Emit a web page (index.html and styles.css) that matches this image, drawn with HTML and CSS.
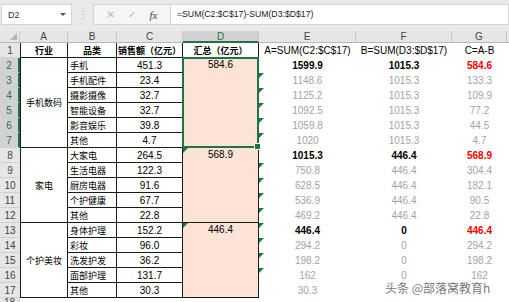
FILE: index.html
```html
<!DOCTYPE html>
<html>
  <head>
    <title>Sheet</title>
    <meta charset="UTF-8">
    <link rel="stylesheet" href="styles.css">
  </head>
  <body>
    <div class="fbar">
      <div class="namebox"><span>D2</span><span class="caret"></span></div>
      <span class="dots">⋮</span>
      <div class="btns"><span class="x">✕</span><span class="ok">✓</span><span class="fx">fx</span></div>
      <div class="formula">=SUM(C2:$C$17)-SUM(D3:$D$17)</div>
    </div>

    <div class="sheet">
      <!--column headers-->
      <div class="ch corner"></div>
      <div class="ch">A</div>
      <div class="ch">B</div>
      <div class="ch">C</div>
      <div class="ch on">D</div>
      <div class="ch">E</div>
      <div class="ch">F</div>
      <div class="ch">G</div>
      <div class="ch end"></div>

      <!--row 1-->
      <div class="rh">1</div>
      <div class="c t a zh b">行业</div>
      <div class="c t zh b">品类</div>
      <div class="c t zh b">销售额（亿元）</div>
      <div class="c t zh b">汇总（亿元）</div>
      <div class="c">A=SUM(C2:$C$17)</div>
      <div class="c">B=SUM(D3:$D$17)</div>
      <div class="c">C=A-B</div>

      <!--group 1-->
      <div class="rh on">2</div>
      <div class="c t a zh m6">手机数码</div>
      <div class="c t zh l">手机</div>
      <div class="c t">451.3</div>
      <div class="c t sum m6 sel">584.6</div>
      <div class="c b">1599.9</div>
      <div class="c b">1015.3</div>
      <div class="c b red">584.6</div>

      <div class="rh on">3</div>
      <div class="c t zh l">手机配件</div>
      <div class="c t">23.4</div>
      <div class="c g err">1148.6</div>
      <div class="c g">1015.3</div>
      <div class="c g">133.3</div>

      <div class="rh on">4</div>
      <div class="c t zh l">摄影摄像</div>
      <div class="c t">32.7</div>
      <div class="c g err">1125.2</div>
      <div class="c g">1015.3</div>
      <div class="c g">109.9</div>

      <div class="rh on">5</div>
      <div class="c t zh l">智能设备</div>
      <div class="c t">32.7</div>
      <div class="c g err">1092.5</div>
      <div class="c g">1015.3</div>
      <div class="c g">77.2</div>

      <div class="rh on">6</div>
      <div class="c t zh l">影音娱乐</div>
      <div class="c t">39.8</div>
      <div class="c g err">1059.8</div>
      <div class="c g">1015.3</div>
      <div class="c g">44.5</div>

      <div class="rh on">7</div>
      <div class="c t zh l">其他</div>
      <div class="c t">4.7</div>
      <div class="c g err">1020</div>
      <div class="c g">1015.3</div>
      <div class="c g">4.7</div>

      <!--group 2-->
      <div class="rh">8</div>
      <div class="c t a zh m5">家电</div>
      <div class="c t zh l">大家电</div>
      <div class="c t">264.5</div>
      <div class="c t sum m5 err">568.9</div>
      <div class="c b">1015.3</div>
      <div class="c b">446.4</div>
      <div class="c b red">568.9</div>

      <div class="rh">9</div>
      <div class="c t zh l">生活电器</div>
      <div class="c t">122.3</div>
      <div class="c g err">750.8</div>
      <div class="c g">446.4</div>
      <div class="c g">304.4</div>

      <div class="rh">10</div>
      <div class="c t zh l">厨房电器</div>
      <div class="c t">91.6</div>
      <div class="c g err">628.5</div>
      <div class="c g">446.4</div>
      <div class="c g">182.1</div>

      <div class="rh">11</div>
      <div class="c t zh l">个护健康</div>
      <div class="c t">67.7</div>
      <div class="c g err">536.9</div>
      <div class="c g">446.4</div>
      <div class="c g">90.5</div>

      <div class="rh">12</div>
      <div class="c t zh l">其他</div>
      <div class="c t">22.8</div>
      <div class="c g err">469.2</div>
      <div class="c g">446.4</div>
      <div class="c g">22.8</div>

      <!--group 3-->
      <div class="rh">13</div>
      <div class="c t a zh m5">个护美妆</div>
      <div class="c t zh l">身体护理</div>
      <div class="c t">152.2</div>
      <div class="c t sum m5 err">446.4</div>
      <div class="c b err">446.4</div>
      <div class="c b">0</div>
      <div class="c b red">446.4</div>

      <div class="rh">14</div>
      <div class="c t zh l">彩妆</div>
      <div class="c t">96.0</div>
      <div class="c g err">294.2</div>
      <div class="c g">0</div>
      <div class="c g">294.2</div>

      <div class="rh">15</div>
      <div class="c t zh l">洗发护发</div>
      <div class="c t">36.2</div>
      <div class="c g err">198.2</div>
      <div class="c g">0</div>
      <div class="c g">198.2</div>

      <div class="rh">16</div>
      <div class="c t zh l">面部护理</div>
      <div class="c t">131.7</div>
      <div class="c g err">162</div>
      <div class="c g">0</div>
      <div class="c g">162</div>

      <div class="rh">17</div>
      <div class="c t zh l">其他</div>
      <div class="c t">30.3</div>
      <div class="c g">30.3</div>

      <div class="rh last">18</div>
    </div>

    <!--watermark sits over the sheet-->
    <div class="mark">头条 @部落窝教育h</div>
  </body>
</html>
```

FILE: styles.css
```css
* {
  box-sizing: border-box;
}
body {
  margin: 0;
  width: 509px;
  height: 302px;
  overflow: hidden;
  position: relative;
  background: #fff;
  font-family: "Liberation Sans", "Noto Sans CJK SC", sans-serif;
  font-size: 10px;
  color: #000;
}

/* formula bar */
.fbar {
  height: 31px;
  background: #e9e9e9;
  display: flex;
  align-items: flex-start;
  padding-top: 4px;
}
.namebox {
  width: 71px;
  height: 21px;
  margin-left: 1px;
  background: #fff;
  border: 1px solid #d4d4d4;
  display: flex;
  align-items: center;
  justify-content: space-between;
  padding: 0 5px 0 6px;
  font-size: 9px;
  color: #333;
}
.caret {
  border-left: 3px solid transparent;
  border-right: 3px solid transparent;
  border-top: 3px solid #555;
}
.dots {
  width: 21px;
  text-align: center;
  line-height: 21px;
  color: #b0b0b0;
  font-size: 10px;
}
.btns {
  width: 78px;
  height: 21px;
  background: #f5f5f5;
  border: 1px solid #d4d4d4;
  display: flex;
  align-items: center;
  justify-content: space-around;
  padding: 0 6px;
  font-family: "DejaVu Sans", sans-serif;
}
.btns .x, .btns .ok {
  color: #b4b4b4;
  font-size: 10px;
}
.btns .fx {
  font-family: "Liberation Serif", serif;
  font-style: italic;
  font-size: 11px;
  color: #444;
}
.formula {
  flex: 1;
  height: 21px;
  background: #fff;
  border: 1px solid #d4d4d4;
  border-left: none;
  padding-left: 6px;
  line-height: 19px;
  font-size: 8.7px;
  color: #222;
}

/* sheet grid */
.sheet {
  display: grid;
  grid-template-columns: 20px 48px 49px 66px 76px 97px 96px 55px 1fr;
  grid-template-rows: 12px repeat(17, 15px) 1fr;
  height: 271px;
}
.ch {
  background: #e6e6e6;
  border-right: 1px solid #c8c8c8;
  border-bottom: 1px solid #b8b8b8;
  display: flex;
  align-items: center;
  justify-content: center;
  color: #444;
  font-size: 10px;
}
.ch.corner {
  position: relative;
}
.ch.corner::after {
  content: "";
  position: absolute;
  right: 2px;
  bottom: 2px;
  border-left: 7px solid transparent;
  border-bottom: 7px solid #b4b4b4;
}
.ch.on {
  background: #d2d2d2;
  color: #217346;
  border-bottom: 2px solid #217346;
}
.ch.end {
  border-right: none;
}
.rh {
  grid-column: 1;
  background: #e6e6e6;
  border-bottom: 1px solid #d0d0d0;
  display: flex;
  align-items: center;
  justify-content: center;
  color: #444;
  font-size: 10px;
}
.rh.on {
  background: #d2d2d2;
  color: #217346;
  border-right: 2px solid #217346;
}
.rh.last {
  border-right: 1px solid #c8c8c8;
  align-items: flex-start;
  line-height: 10px;
}

/* cells */
.c {
  display: flex;
  align-items: center;
  justify-content: center;
  white-space: nowrap;
  overflow: hidden;
}
.t {
  border-right: 1px solid #1a1a1a;
  border-bottom: 1px solid #1a1a1a;
}
.a {
  border-left: 1px solid #1a1a1a;
}
.zh {
  font-family: "Noto Sans CJK SC", sans-serif;
  font-size: 9px;
}
.l {
  justify-content: flex-start;
  padding-left: 2px;
}
.b {
  font-weight: bold;
}
.g {
  color: #a3a3a3;
}
.red {
  color: #ff0000;
}
.m6 {
  grid-row: span 6;
}
.m5 {
  grid-row: span 5;
}
.sum {
  background: #fbe4d6;
  align-items: flex-start;
  padding-top: 1px;
}

/* green error triangles */
.err {
  position: relative;
}
.err::before {
  content: "";
  position: absolute;
  left: 0;
  top: 0;
  border-top: 5px solid #1f7a38;
  border-right: 5px solid transparent;
}

/* active selection */
.sel {
  position: relative;
  z-index: 2;
  overflow: visible;
}
.sel::after {
  content: "";
  position: absolute;
  top: -1px;
  left: -1px;
  right: -1px;
  bottom: -1px;
  border: 2px solid #217346;
}
.sel::before {
  content: "";
  position: absolute;
  right: -3px;
  bottom: -3px;
  width: 5px;
  height: 5px;
  background: #217346;
  border: 1px solid #fff;
  z-index: 3;
}

.mark {
  position: absolute;
  left: 385px;
  top: 282px;
  font-family: "Noto Sans CJK SC", sans-serif;
  font-size: 12px;
  line-height: 12px;
  color: rgba(70, 70, 70, 0.75);
  text-shadow: 0 0 2px #fff, 0 0 1px #fff;
  white-space: nowrap;
}
```
